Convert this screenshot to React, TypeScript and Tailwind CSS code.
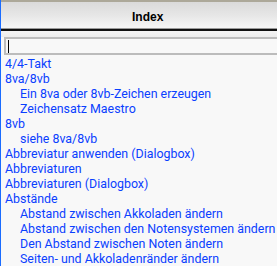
import React from "react";

const entries: { text: string; sub?: boolean }[] = [
  { text: "4/4-Takt" },
  { text: "8va/8vb" },
  { text: "Ein 8va oder 8vb-Zeichen erzeugen", sub: true },
  { text: "Zeichensatz Maestro", sub: true },
  { text: "8vb" },
  { text: "siehe 8va/8vb", sub: true },
  { text: "Abbreviatur anwenden (Dialogbox)" },
  { text: "Abbreviaturen" },
  { text: "Abbreviaturen (Dialogbox)" },
  { text: "Abstände" },
  { text: "Abstand zwischen Akkoladen ändern", sub: true },
  { text: "Abstand zwischen den Notensystemen ändern", sub: true },
  { text: "Den Abstand zwischen Noten ändern", sub: true },
  { text: "Seiten- und Akkoladenränder ändern", sub: true },
];

export default function App() {
  return (
    <div className="w-[277px] h-[266px] overflow-hidden bg-[#f8f8f8] border-l border-[#1a6cff]">
      {/* header */}
      <div className="h-[2px] bg-[#aca899]" />
      <div className="h-[26px] bg-gradient-to-b from-[#dadada] via-[#e6e6e6] to-[#f6f6f6] flex items-center pl-[131px] pt-[3px]">
        <span className="font-['Liberation_Sans',Arial,sans-serif] text-[12px] font-bold text-black leading-none">
          Index
        </span>
      </div>
      <div className="h-[1px] bg-[#9a9a9a]" />
      <div className="h-[2px] bg-[#101010]" />
      <div className="h-[6px] bg-gradient-to-b from-[#f4f4f4] to-[#ececec]" />

      {/* search */}
      <div className="pl-[3px]">
        <div className="h-[18px] border-2 border-r-0 border-[#bcbcbc] bg-[#f8f8f8] flex items-center pl-[2px]">
          <div className="w-px h-[13px] bg-black" />
        </div>
      </div>

      {/* list */}
      <ul className="pt-[1px] font-['Roboto',sans-serif] text-[12.4px] leading-[15px] text-[#0a40ff] whitespace-nowrap">
        {entries.map((e, i) => (
          <li key={i} className={e.sub ? "pl-[19px]" : "pl-[4px]"}>
            {e.text}
          </li>
        ))}
      </ul>
    </div>
  );
}
